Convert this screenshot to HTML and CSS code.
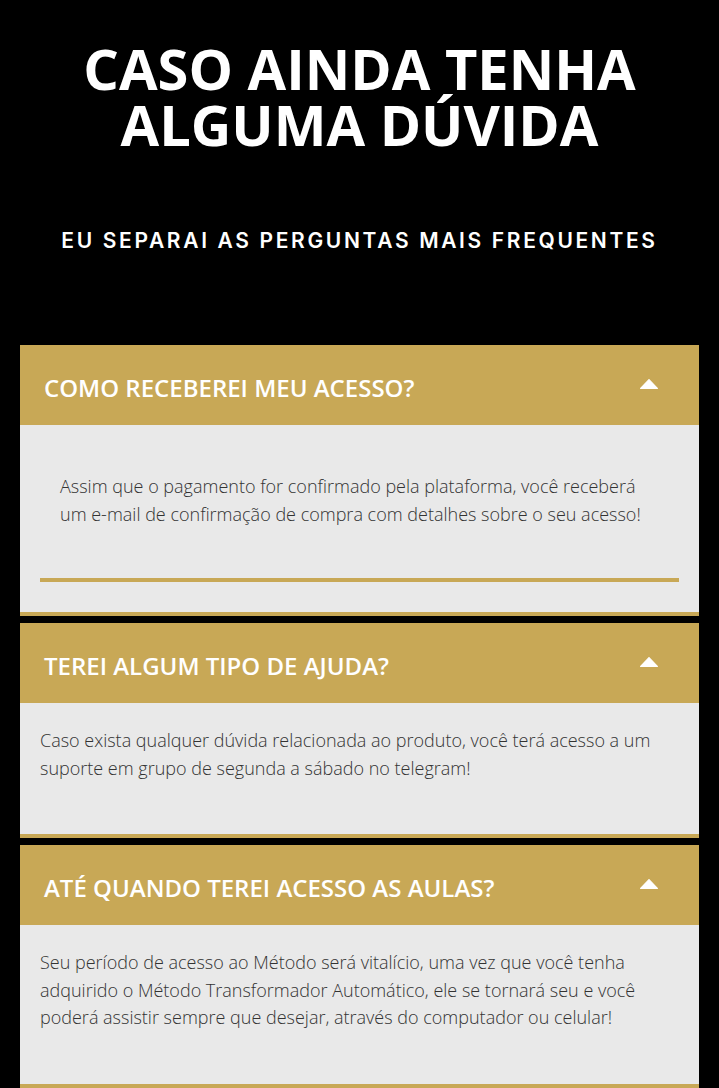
FILE: index.html
```html
<!DOCTYPE html>
<html lang="pt-BR">
<head>
<meta charset="utf-8">
<title>FAQ</title>
<link rel="stylesheet" href="styles.css">
</head>
<body>
<section class="faq">
  <h1 class="title">CASO AINDA TENHA<br>ALGUMA DÚVIDA</h1>
  <h2 class="subtitle">EU SEPARAI AS PERGUNTAS MAIS FREQUENTES</h2>

  <div class="accordion">
    <div class="item">
      <div class="item-head">
        <span class="item-title">COMO RECEBEREI MEU ACESSO?</span>
        <svg class="caret" viewBox="0 0 18 10" width="18" height="10"><path d="M9 0.6 L17.4 9.4 L0.6 9.4 Z" fill="#fff" stroke="#fff" stroke-linejoin="round" stroke-width="1.2"/></svg>
      </div>
      <div class="item-body item-body-first">
        <p class="text inner">Assim que o pagamento for confirmado pela plataforma, você receberá um e-mail de confirmação de compra com detalhes sobre o seu acesso!</p>
        <div class="divider"></div>
      </div>
    </div>

    <div class="item">
      <div class="item-head">
        <span class="item-title">TEREI ALGUM TIPO DE AJUDA?</span>
        <svg class="caret" viewBox="0 0 18 10" width="18" height="10"><path d="M9 0.6 L17.4 9.4 L0.6 9.4 Z" fill="#fff" stroke="#fff" stroke-linejoin="round" stroke-width="1.2"/></svg>
      </div>
      <div class="item-body">
        <p class="text">Caso exista qualquer dúvida relacionada ao produto, você terá acesso a um suporte em grupo de segunda a sábado no telegram!</p>
      </div>
    </div>

    <div class="item">
      <div class="item-head">
        <span class="item-title">ATÉ QUANDO TEREI ACESSO AS AULAS?</span>
        <svg class="caret" viewBox="0 0 18 10" width="18" height="10"><path d="M9 0.6 L17.4 9.4 L0.6 9.4 Z" fill="#fff" stroke="#fff" stroke-linejoin="round" stroke-width="1.2"/></svg>
      </div>
      <div class="item-body">
        <p class="text">Seu período de acesso ao Método será vitalício, uma vez que você tenha adquirido o Método Transformador Automático, ele se tornará seu e você poderá assistir sempre que desejar, através do computador ou celular!</p>
      </div>
    </div>
  </div>
</section>
</body>
</html>
```

FILE: styles.css
```css
* { box-sizing: border-box; }

html, body {
  margin: 0;
  padding: 0;
  background: #000;
}

.faq {
  padding: 40px 20px 0;
  font-family: "Open Sans", "Liberation Sans", sans-serif;
}

.title {
  margin: 0;
  color: #fff;
  font-family: "Open Sans", sans-serif;
  font-weight: 700;
  font-size: 56px;
  line-height: 56px;
  text-align: center;
}

.subtitle {
  margin: 75px 0 0;
  color: #fff;
  font-family: "Inter", "Noto Sans", sans-serif;
  font-weight: 600;
  font-size: 21px;
  line-height: 28px;
  text-align: center;
  letter-spacing: 2.65px;
}

.accordion {
  margin-top: 90px;
  display: flex;
  flex-direction: column;
  gap: 7px;
}

.item {
  border-bottom: 4px solid #c8a856;
}

.item-head {
  height: 80px;
  background: #c8a856;
  display: flex;
  align-items: center;
  justify-content: space-between;
  padding: 0 41px 0 24px;
}

.item-title {
  color: #fff;
  font-weight: 600;
  font-size: 24px;
  margin-top: 5px;
}

.caret {
  display: block;
  margin-top: -2px;
}

.item-body {
  background: #e9e9e9;
  padding: 24px 20px 52px;
}

.item-body-first {
  padding: 48px 20px 30px;
}

.text {
  margin: 0;
  color: #333;
  font-weight: 300;
  font-size: 18px;
  line-height: 27.5px;
}

.text.inner {
  padding: 0 20px;
}

.divider {
  margin-top: 50px;
  height: 4px;
  background: #c8a856;
}
```
